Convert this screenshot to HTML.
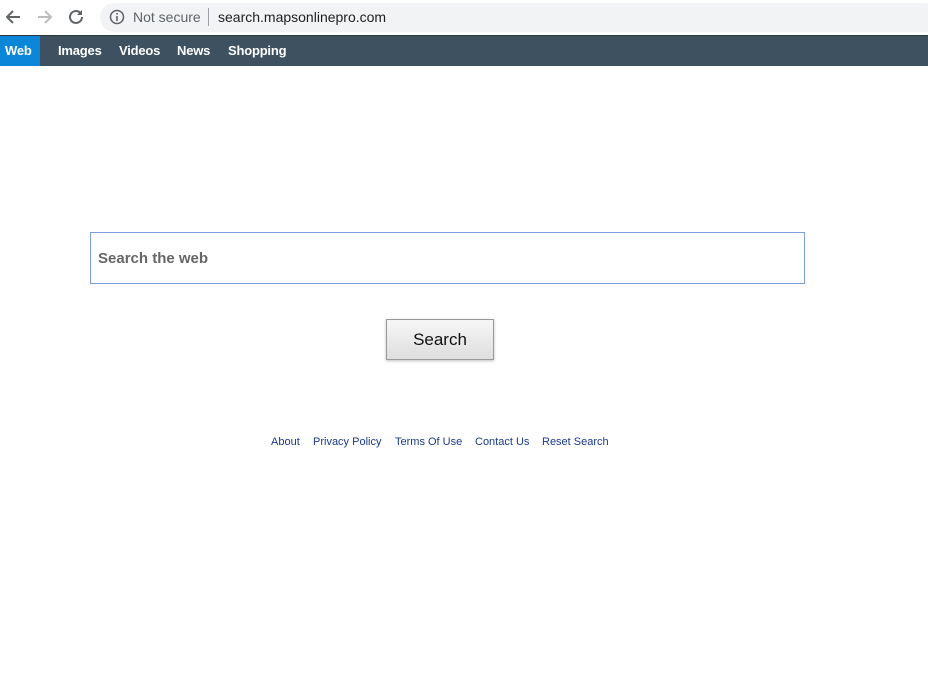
<!DOCTYPE html>
<html><head><style>
*{margin:0;padding:0;box-sizing:border-box}
body{width:928px;height:682px;background:#fff;font-family:"Liberation Sans",Arial,sans-serif;position:relative;overflow:hidden}
.chrome{position:absolute;left:0;top:0;width:928px;height:35px;background:#fff}
.pill{position:absolute;left:100px;top:3px;width:840px;height:29px;border-radius:15px;background:#f1f3f4}
.url{position:absolute;top:9px;font-size:14px;color:#202124}
.nav{position:absolute;left:0;top:35px;width:928px;height:31px;background:#3e5161;border-top:1px solid #2a3540}
.nav span{position:absolute;top:7px;color:#fff;font-weight:bold;font-size:13px;letter-spacing:-0.2px}
.web{position:absolute;left:0;top:0;width:40px;height:30px;background:#0b86d8}
.box{position:absolute;left:90px;top:232px;width:715px;height:52px;border:1px solid #7b9fe0}
.box span{position:absolute;left:7px;top:17px;font-size:15px;font-weight:bold;color:#666}
.btn{position:absolute;left:386px;top:319px;width:108px;height:41px;border:1px solid #999;background:linear-gradient(#f6f6f6,#dedede);box-shadow:0 1px 3px rgba(0,0,0,.25);font-size:17px;text-align:center;line-height:39px;color:#111}
.links{position:absolute;top:436px;font-size:11px;color:#1b3a8c}
.links span{position:absolute;white-space:nowrap}
</style></head><body>
<div class="chrome">
<svg width="100" height="35" style="position:absolute;left:0;top:0">
<path d="M20 17H7M13 11l-6 6 6 6" stroke="#5f6368" stroke-width="2" fill="none"/>
<path d="M38 17h13M45 11l6 6-6 6" stroke="#bdbdbd" stroke-width="2" fill="none"/>
<path d="M82 17a6 6 0 1 1-2-4.5" stroke="#5f6368" stroke-width="2" fill="none"/><path d="M82 10v5h-5z" fill="#5f6368"/>
</svg>
<div class="pill"></div>
<svg width="16" height="16" style="position:absolute;left:109px;top:9px"><circle cx="8" cy="8" r="6.5" stroke="#5f6368" stroke-width="1.5" fill="none"/><rect x="7.2" y="7" width="1.6" height="5" fill="#5f6368"/><rect x="7.2" y="4" width="1.6" height="1.6" fill="#5f6368"/></svg>
<span class="url" style="left:133px;color:#5f6368">Not secure</span>
<div style="position:absolute;left:208px;top:8px;width:1px;height:18px;background:#9aa0a6"></div>
<span class="url" style="left:218px">search.mapsonlinepro.com</span>
</div>
<div class="nav"><div class="web"></div>
<span style="left:5px">Web</span><span style="left:58px">Images</span><span style="left:119px">Videos</span><span style="left:177px">News</span><span style="left:228px">Shopping</span></div>
<div class="box"><span>Search the web</span></div>
<div class="btn">Search</div>
<div class="links"><span style="left:271px">About</span><span style="left:313px">Privacy Policy</span><span style="left:395px">Terms Of Use</span><span style="left:475px">Contact Us</span><span style="left:542px">Reset Search</span></div>
</body></html>
